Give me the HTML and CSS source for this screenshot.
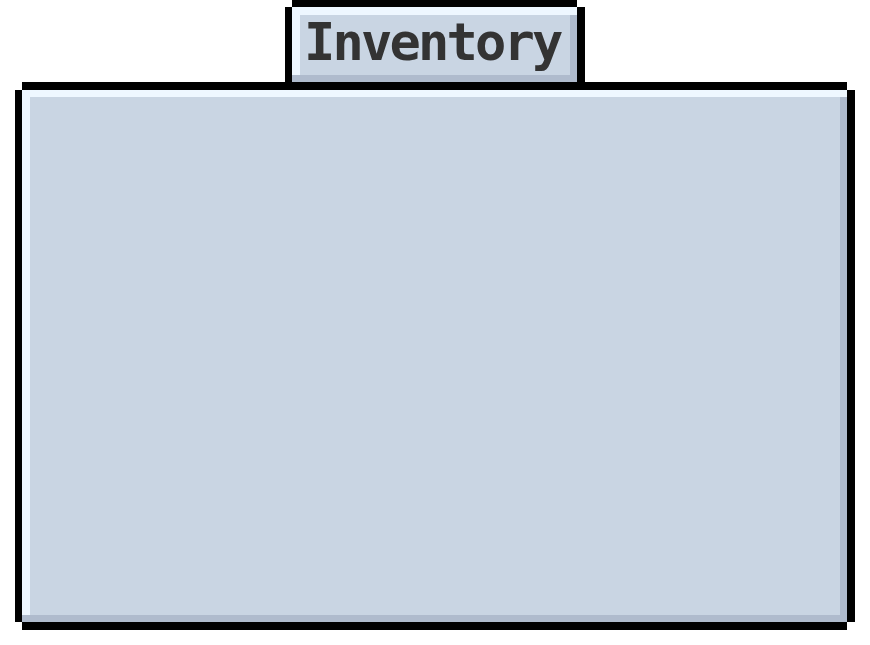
FILE: index.html
```html
<!DOCTYPE html>
<html lang="en">
<head>
    <meta charset="UTF-8">
    <meta name="viewport" content="width=device-width, initial-scale=1.0">
    <title>Inventory</title>
    <link rel="stylesheet" href="styles.css">
</head>
<body>

    <div class="window">
        <div class="tab-frame">
            <h1 class="tab">Inventory</h1>
        </div>
        <div class="panel-frame">
            <div class="panel">
                <div class="panel-face"></div>
            </div>
        </div>
    </div>

</body>
</html>
```

FILE: styles.css
```css
html,
body {
    height: 100%;
}
body {
    margin: 0;
    padding: 0;
    background-color: #ffffff;
}
.window {
    width: 840px;
    padding: 7px 15px 15px 15px;
    display: flex;
    flex-direction: column;
    align-items: center;
    gap: 8px;
}
/* pixel border: the frame draws the sides, the child the top and bottom,
   and the child pokes out over the frame so the corners stay notched */
.tab-frame,
.panel-frame {
    display: flex;
    flex-shrink: 0;
    box-sizing: border-box;
    border-left: 7px solid #000;
    border-right: 8px solid #000;
}
.tab-frame {
    width: 300px;
    height: 75px;
}
.panel-frame {
    width: 840px;
    height: 532px;
}
.tab {
    box-sizing: border-box;
    flex: 1;
    height: 82px;
    margin: -7px 0 0 0;
    padding: 8px 0 0 12px;
    border-top: 7px solid #000;
    background-color: #c9d5e3;
    box-shadow:
        inset 0 8px #eef7ff, inset 0 -7px #afbbcd,
        inset -7px 0 #afbbcd, inset 8px 0 #eef7ff;
    font-family: "DejaVu Sans Mono", monospace;
    font-size: 52px;
    font-weight: bold;
    letter-spacing: -2.8px;
    line-height: 54px;
    color: #333333;
    white-space: nowrap;
}
.panel {
    flex: 1;
    display: flex;
    margin: -8px 0;
    border-top: 8px solid #000;
    border-bottom: 8px solid #000;
}
.panel-face {
    flex: 1;
    background-color: #c9d5e3;
    box-shadow:
        inset 0 7px #eef7ff, inset 0 -7px #afbbcd,
        inset -7px 0 #afbbcd, inset 8px 0 #eef7ff;
}
```
